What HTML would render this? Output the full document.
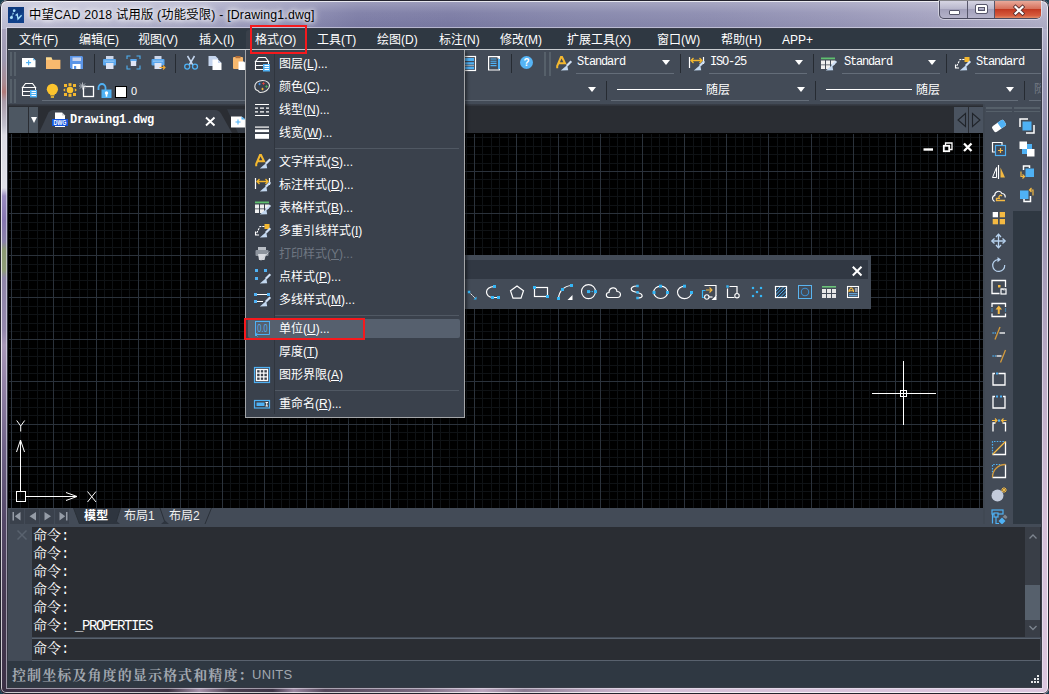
<!DOCTYPE html>
<html lang="zh-CN"><head><meta charset="utf-8"><title>ZWCAD 2018</title>
<style>
html,body{margin:0;padding:0}
body{width:1049px;height:694px;overflow:hidden;position:relative;background:#1b3f4f;font-family:"Liberation Sans","Noto Sans CJK SC",sans-serif;font-size:12px;color:#fff;line-height:1}
#win,#win div,#win svg,.abs{position:absolute}
svg{overflow:visible}
#win{left:0;top:0;width:1049px;height:694px;border-radius:7px 7px 6px 6px;overflow:hidden;
 background:
  linear-gradient(90deg,#c2c2d8 0%,#b9b9d1 10%,#a6a6c4 20%,#8e8eb3 28%,#7d7da6 34%,#7b7ba4 43%,#8586ab 55%,#8c8cb0 68%,#9897b8 80%,#a6a4c1 90%,#b3b1c9 100%);}
#frameL{left:0;top:29px;width:8px;height:658px;background:linear-gradient(180deg,#a9a3bd 0px,#9c98b0 31px,#a88a92 54px,#b07a7a 63px,#a89aa8 72px,#c0bfcc 96px,#dcdce4 106px,#e0e0e8 159px,#9a8cc0 167px,#8676b0 191px,#8a82a8 213px,#8c9a74 221px,#8e9c78 241px,#8f86a8 249px,#9488ac 301px,#a898b8 316px,#9484a8 351px,#6e6286 421px,#544868 491px,#463a52 571px,#3c3046 657px)}
#frameR{left:1041px;top:29px;width:8px;height:658px;background:linear-gradient(180deg,#b2b0c9 0,#9a98b6 8%,#8e8cab 20%,#b9a9c4 50%,#d5bfd8 75%,#dcc6de 100%)}
#frameB{left:0;top:687px;width:1049px;height:7px;background:linear-gradient(90deg,#3a2e42 0,#4a3c52 8%,#3a3040 16%,#a792aa 19%,#4a3e50 22%,#3e3446 26%,#9a86a0 28%,#544659 31%,#7a6a80 40%,#bba6be 46%,#8a7a90 50%,#b9a4bc 56%,#d5bfd6 62%,#dcc6de 100%)}
#edge{left:0;top:0;width:1047px;height:692px;border:1px solid #23232d;border-radius:7px 7px 6px 6px;box-shadow:inset 0 0 0 1px rgba(255,255,255,.75)}
#client{left:8px;top:29px;width:1033px;height:658px;background:#434b57;box-shadow:0 0 0 1px rgba(40,44,54,.9),0 0 0 2px rgba(235,235,245,.55)}
#title{left:29px;top:9px;font-size:12.3px;color:#000;white-space:nowrap;text-shadow:0 0 4px #fff,0 0 7px #fff,0 0 10px rgba(255,255,255,.9);letter-spacing:.2px}
#menubar{left:8px;top:29px;width:1033px;height:20px;background:#2f3842}
#menuline{left:8px;top:49px;width:1033px;height:1px;background:#c9ccd0}
.mi{top:34px;font-size:12px;white-space:nowrap;color:#fff}
#tb{left:8px;top:50px;width:1033px;height:54px;background:#434b57}
.ul{height:1px;background:#646d79}
.vs{width:1px;background:#23272e}
.sim{font-family:"Liberation Mono","Noto Serif CJK SC",monospace;font-size:12px;letter-spacing:-1.2px;white-space:nowrap;color:#fff}
.arrow{width:0;height:0;border-left:4px solid transparent;border-right:4px solid transparent;border-top:5px solid #fff}
#tabbar{left:8px;top:104px;width:1033px;height:29px;background:#2a2d33}
#canvas{left:8px;top:133px;width:975px;height:375px;background:#000}
#laytabs{left:8px;top:508px;width:975px;height:16px;background:#434b57}
#cmd{left:8px;top:524px;width:1033px;height:137px;background:#434b57}
#cmdhist{left:32px;top:527px;width:1009px;height:110px;background:#2a2d33}
#cmdin{left:32px;top:638px;width:1008px;height:21px;background:#2a2d33;border-top:1px solid #59626e;border-bottom:1px solid #59626e}
.ct{left:33px;font-family:"Liberation Mono","Noto Serif CJK SC",monospace;font-size:14px;letter-spacing:-1.4px;white-space:nowrap;color:#fff}
.ct b{font-weight:normal;letter-spacing:0}
#status{left:8px;top:661px;width:1033px;height:26px;background:#2f3842}
#menu{left:245px;top:50px;width:220px;height:368px;background:#3a414c;box-sizing:border-box;border:1px solid #a3a5a8;border-top:none;box-shadow:2px 2px 3px rgba(0,0,0,.45)}
.mt{left:279px;font-size:12px;white-space:nowrap;color:#fff}
.mt u{text-decoration:underline;text-underline-offset:1px}
.msep{left:275px;width:184px;height:1px;background:#505863}
#ftb{left:455px;top:255px;width:416px;height:54px;background:#434b57}
#rtb{left:985px;top:104px;width:28px;height:420px;background:#434b57}
#rtb2{left:1013px;top:104px;width:28px;height:107px;background:#434b57}
#rdark{left:1013px;top:211px;width:28px;height:313px;background:#2f3842}

</style></head>
<body>
<div id="win" class="abs">
 <div id="frameL"></div><div id="frameR"></div><div id="frameB"></div>
 <div id="titleshade" style="left:0;top:0;width:1049px;height:29px;background:linear-gradient(180deg,rgba(255,255,255,.28) 0,rgba(255,255,255,.05) 45%,rgba(40,40,80,.06) 100%)"></div>
 <div id="edge"></div>
 <!-- title icon -->
 <svg style="left:8px;top:7px" width="16" height="16" viewBox="0 0 16 16"><rect width="16" height="16" fill="#10408a"/><path d="M0 0H16V5L0 12Z" fill="#0c3577" opacity=".6"/><path d="M3.6 10.4L6.2 3.6" stroke="#9fdcf7" stroke-width="1.2" stroke-dasharray="2 1" fill="none"/><circle cx="6.2" cy="3.6" r="1.3" fill="#a8e2fa"/><circle cx="3.4" cy="10.6" r="1.5" fill="#a8e2fa"/><path d="M7.6 8.6L9.2 7.2L10 12L13.6 8.2" stroke="#a8e2fa" stroke-width="1.3" fill="none"/></svg>
 <div id="title">中望CAD 2018 试用版 (功能受限) - [Drawing1.dwg]</div>
 <!-- window buttons -->
 <div id="wbtn" style="left:939px;top:1px;width:102px;height:18px;border:1px solid #4a4a5e;border-top:none;border-radius:0 0 5px 5px;box-sizing:border-box;background:linear-gradient(180deg,#d6d5e3 0,#b9b8cd 45%,#a3a1bb 50%,#b4b2c9 100%);box-shadow:0 0 0 1px rgba(255,255,255,.45)">
  <div style="left:55px;top:0;width:46px;height:17px;border-radius:0 0 4px 0;background:linear-gradient(180deg,#e9a99a 0,#d6715c 45%,#c23a22 50%,#d65a3c 85%,#e08a66 100%)"></div>
  <div style="left:27px;top:0;width:1px;height:17px;background:#56566a"></div>
  <div style="left:54px;top:0;width:1px;height:17px;background:#56566a"></div>
  <div style="left:9px;top:9px;width:9px;height:3px;background:#fff;border:1px solid #56566a;border-radius:1px"></div>
  <div style="left:36px;top:4px;width:7px;height:4px;border:2px solid #fff;outline:1px solid #56566a;border-radius:1px;box-shadow:inset 0 0 0 1px #56566a"></div>
  <svg style="left:72px;top:3px" width="14" height="12" viewBox="0 0 14 12" fill="none"><path d="M3.500 3L10.500 9.500M10.500 3L3.500 9.500" stroke="#5a3030" stroke-width="3.800" stroke-linecap="square"/><path d="M3.500 3L10.500 9.500M10.500 3L3.500 9.500" stroke="#fff" stroke-width="2.200" stroke-linecap="square"/></svg>
 </div>
 <div id="client"></div>
 <div id="menubar"></div><div id="menuline"></div>
 <div style="left:246px;top:30px;width:60px;height:19px;background:#39404a;border-radius:3px 3px 0 0"></div>
 <div class="mi" style="left:19px">文件(F)</div>
 <div class="mi" style="left:79px">编辑(E)</div>
 <div class="mi" style="left:138px">视图(V)</div>
 <div class="mi" style="left:199px">插入(I)</div>
 <div class="mi" style="left:255px">格式(O)</div>
 <div class="mi" style="left:317px">工具(T)</div>
 <div class="mi" style="left:377px">绘图(D)</div>
 <div class="mi" style="left:439px">标注(N)</div>
 <div class="mi" style="left:500px">修改(M)</div>
 <div class="mi" style="left:567px">扩展工具(X)</div>
 <div class="mi" style="left:657px">窗口(W)</div>
 <div class="mi" style="left:721px">帮助(H)</div>
 <div class="mi" style="left:782px">APP+</div>
 <div id="tb"></div>
 <div style="left:9.5px;top:52px;width:2px;height:24px;background:#56606a"></div>
<div style="left:9.5px;top:79px;width:2px;height:24px;background:#56606a"></div>
<div style="left:14px;top:52px;width:2px;height:24px;background:#56606a"></div>
<div style="left:14px;top:79px;width:2px;height:24px;background:#56606a"></div>
<div style="left:544px;top:52px;width:2px;height:24px;background:#56606a"></div>
<div style="left:548.5px;top:52px;width:2px;height:24px;background:#56606a"></div>
<div style="left:94px;top:54px;width:1px;height:19px;background:#262b32"></div>
<div style="left:175px;top:54px;width:1px;height:19px;background:#262b32"></div>
<div style="left:511px;top:54px;width:1px;height:19px;background:#262b32"></div>
<div style="left:680px;top:54px;width:1px;height:19px;background:#262b32"></div>
<div style="left:813px;top:54px;width:1px;height:19px;background:#262b32"></div>
<div style="left:946px;top:54px;width:1px;height:19px;background:#262b32"></div>
<svg style="left:21px;top:55px" width="16" height="16" viewBox="0 0 16 16" fill="none"><path d="M1 3H12.200L14.500 5.300V12.300H1Z" fill="#fff"/><path d="M12.200 3L14.500 5.300H12.200Z" fill="#4fb1f4"/><path d="M7.600 5.200V10.200M5.100 7.700H10.100" stroke="#4fb1f4" stroke-width="1.200"/></svg>
<svg style="left:45px;top:55px" width="16" height="16" viewBox="0 0 16 16" fill="none"><path d="M1 2.200H6.500L7.500 5H1Z" fill="#fbd98f"/><rect x="1" y="4.800" width="14.400" height="9.200" fill="#f8b96e"/></svg>
<svg style="left:69px;top:55px" width="16" height="16" viewBox="0 0 16 16" fill="none"><path d="M1 1H13L14 2V14H2.200L1 12.800Z" fill="#5b95e8"/><rect x="3.500" y="2.500" width="8.500" height="3.500" fill="#c8d3ee"/><rect x="3.500" y="9" width="8" height="5" fill="#fff"/><rect x="5" y="11" width="2.200" height="3" fill="#5b95e8"/></svg>
<svg style="left:102px;top:55px" width="16" height="16" viewBox="0 0 16 16" fill="none"><rect x="4" y="1" width="7.500" height="3.500" fill="#ccd6ea"/><rect x="1" y="4" width="13" height="6.500" rx="1" fill="#5ba7ee"/><rect x="2.500" y="5.500" width="10" height="1.300" fill="#8fc6f5"/><rect x="4" y="8" width="7.500" height="6" fill="#dfe5f5"/></svg>
<svg style="left:126px;top:55px" width="16" height="16" viewBox="0 0 16 16" fill="none"><path d="M1 4V1H4.500M10.500 1H14V4M14 10.500V14H10.500M4.500 14H1V10.500" stroke="#4fb1f4" stroke-width="1.100"/><rect x="4.300" y="4" width="6.400" height="2.600" fill="#5ba7ee"/><rect x="4.800" y="6" width="5.400" height="5" fill="#dfe5f5"/></svg>
<svg style="left:150px;top:55px" width="16" height="16" viewBox="0 0 16 16" fill="none"><rect x="4.500" y="1" width="7" height="3.500" fill="#ccd6ea"/><rect x="1.500" y="4" width="13" height="6.500" rx="1" fill="#5ba7ee"/><rect x="3" y="5.500" width="10" height="1.300" fill="#8fc6f5"/><rect x="4.500" y="8" width="7" height="6" fill="#dfe5f5"/><path d="M9.500 12.500H15M13 10.500L15 12.500L13 14.500" stroke="#f4a92f" stroke-width="1.100"/></svg>
<svg style="left:183px;top:55px" width="16" height="16" viewBox="0 0 16 16" fill="none"><path d="M4.500 1L9.800 10M11.500 1L6.200 10" stroke="#c4d6ee" stroke-width="1.500"/><circle cx="4.200" cy="11.600" r="2.500" stroke="#4fb1f4" stroke-width="1.300"/><circle cx="12" cy="11.600" r="2.500" stroke="#4fb1f4" stroke-width="1.300"/></svg>
<svg style="left:207px;top:55px" width="16" height="16" viewBox="0 0 16 16" fill="none"><path d="M1.500 1H8.500L11 3.500V11H1.500Z" fill="#c5d5ee"/><path d="M5.500 4.500H11L14.500 8V15H5.500Z" fill="#fff"/><path d="M11 4.500L14.500 8H11Z" fill="#c5d5ee"/></svg>
<svg style="left:232px;top:55px" width="16" height="16" viewBox="0 0 16 16" fill="none"><rect x="1" y="2" width="10" height="12" rx="1" fill="#f8b96e"/><rect x="3.500" y="1" width="5" height="2.200" fill="#b4703a"/><path d="M6.500 6.500H12L15 9.500V15H6.500Z" fill="#fff"/></svg>
<svg style="left:462px;top:56px" width="16" height="16" viewBox="0 0 16 16" fill="none"><rect x=".500" y=".500" width="13" height="14" stroke="#fff" stroke-width="1.200"/><rect x="2" y="2" width="10" height="3" fill="#4fb1f4"/><rect x="2" y="6.200" width="10" height="2.300" fill="#4fb1f4"/><rect x="2" y="10.600" width="10" height="2.600" fill="#4fb1f4"/><path d="M2.500 9.500H11.500" stroke="#fff" stroke-width="1" stroke-dasharray="1 1"/></svg>
<svg style="left:488px;top:56px" width="16" height="16" viewBox="0 0 16 16" fill="none"><path d="M.600 .600H11.400V14H.600Z" stroke="#fff" stroke-width="1.200"/><path d="M2.500 3H8.500M2.500 5.200H8.500M2.500 7.400H8.500M2.500 9.600H8.500" stroke="#4fb1f4" stroke-width="1.100"/><rect x="10" y="3" width="2" height="10" fill="#4fb1f4"/><rect x="9.500" y="1" width="2.500" height="1.500" fill="#fff"/></svg>
<div style="left:520px;top:56px;width:13px;height:13px;border-radius:50%;background:#56b4f5;color:#fff;font:bold 10px 'Liberation Sans',sans-serif;text-align:center;line-height:13px">?</div>
<svg style="left:555px;top:56px" width="16" height="16" viewBox="0 0 16 16" fill="none"><path d="M2.200 12.300V10L6 1H7L10 7.300H3.600" stroke="#f4b82f" stroke-width="2"/><g transform="translate(0,.6)"><path d="M16.300 4.700L11.800 9.200" stroke="#cfe0f5" stroke-width="2.200"/><path d="M12.200 8.300L13.200 13.600L5.800 14Z" fill="#c3d8f0"/></g></svg>
<svg style="left:688px;top:56px" width="16" height="16" viewBox="0 0 16 16" fill="none"><path d="M1.500 1V12M15.500 1V8" stroke="#fff" stroke-width="1.200"/><path d="M3 4.500H14M5.500 2L3 4.500L5.500 7M11.500 2L14 4.500L11.500 7" stroke="#f4b82f" stroke-width="1.300"/><g transform="translate(0,.6)"><path d="M16.300 4.700L11.800 9.200" stroke="#cfe0f5" stroke-width="2.200"/><path d="M12.200 8.300L13.200 13.600L5.800 14Z" fill="#c3d8f0"/></g></svg>
<svg style="left:820px;top:56px" width="16" height="16" viewBox="0 0 16 16" fill="none"><rect x="1" y="1.500" width="14" height="1.800" fill="#5fc06f"/><path d="M1 4.600h4v3.800h-4zM6 4.600h4v3.800h-4zM11 4.600h4v3.800h-4zM1 9.300h4v3.700h-4zM6 9.300h4v3.700h-4z" fill="#f0f0f0"/><g transform="translate(0,.6)"><path d="M16.300 4.700L11.800 9.200" stroke="#cfe0f5" stroke-width="2.200"/><path d="M12.200 8.300L13.200 13.600L5.800 14Z" fill="#c3d8f0"/></g></svg>
<svg style="left:954px;top:56px" width="16" height="16" viewBox="0 0 16 16" fill="none"><rect x="10.500" y="1" width="5" height="5" fill="#f4b82f"/><path d="M10.500 3.500H6L2 11.500" stroke="#fff" stroke-width="1.100" stroke-dasharray="2.200 1"/><path d="M1.500 8.500V12H5" stroke="#fff" stroke-width="1.100"/><g transform="translate(0,.6)"><path d="M16.300 4.700L11.800 9.200" stroke="#cfe0f5" stroke-width="2.200"/><path d="M12.200 8.300L13.200 13.600L5.800 14Z" fill="#c3d8f0"/></g></svg>
<div class="sim" style="left:577px;top:56px">Standard</div>
<div class="arrow" style="left:662px;top:60px"></div>
<div class="ul" style="left:576px;top:73px;width:98px"></div>
<div class="sim" style="left:710px;top:56px">ISO-25</div>
<div class="arrow" style="left:795px;top:60px"></div>
<div class="ul" style="left:709px;top:73px;width:98px"></div>
<div class="sim" style="left:844px;top:56px">Standard</div>
<div class="arrow" style="left:928px;top:60px"></div>
<div class="ul" style="left:842px;top:73px;width:98px"></div>
<div class="sim" style="left:976px;top:56px">Standard</div>
<div class="ul" style="left:975px;top:73px;width:66px"></div>
<svg style="left:21px;top:82px" width="16" height="16" viewBox="0 0 16 16" fill="none"><path d="M4.500 1.500H11.500L14.500 5.500H1.500ZM1.500 5.500V9.500H14.500V5.500M1.500 9.500V13.500H9" stroke="#fff" stroke-width="1.100"/><rect x="9" y="8" width="7" height="7.500" fill="#4fb1f4"/><path d="M10.500 9.500H15M10.500 11.500H15M10.500 13.500H15" stroke="#fff" stroke-width="1"/></svg>
<svg style="left:45px;top:82px" width="16" height="16" viewBox="0 0 16 16" fill="none"><circle cx="7.400" cy="7.300" r="5.600" fill="#fcc42e"/><rect x="5.200" y="11.500" width="4.400" height="2" fill="#fcc42e"/><rect x="5.800" y="14.200" width="3.200" height="1.600" fill="#fcc42e"/></svg>
<svg style="left:62.5px;top:83px" width="16" height="16" viewBox="0 0 16 16" fill="none"><circle cx="7" cy="7" r="3.300" fill="#fcc42e"/><rect x="1" y="1" width="3" height="3" fill="#f4b82f"/><rect x="5.5" y="0.2" width="3" height="3" fill="#f4b82f"/><rect x="10" y="1" width="3" height="3" fill="#f4b82f"/><rect x="1" y="10" width="3" height="3" fill="#f4b82f"/><rect x="10" y="10" width="3" height="3" fill="#f4b82f"/><rect x="5.5" y="10.8" width="3" height="3" fill="#f4b82f"/><path d="M0 7L2.200 5.200V8.800ZM14 7L11.800 5.200V8.800Z" fill="#f4b82f"/></svg>
<svg style="left:79px;top:82px" width="16" height="16" viewBox="0 0 16 16" fill="none"><rect x="4.500" y="4.500" width="10" height="10" stroke="#fff" stroke-width="1.300"/><path d="M3.500 .500V7.500M0 4H7M1 1.500L6 6.500M6 1.500L1 6.500" stroke="#b9bec5" stroke-width=".900"/></svg>
<svg style="left:97px;top:83px" width="16" height="16" viewBox="0 0 16 16" fill="none"><path d="M1.500 7V4.500A3.500 3.500 0 0 1 8.500 4.500V7" stroke="#4fb1f4" stroke-width="1.800"/><rect x="4.500" y="6.500" width="10" height="8.500" fill="#4fb1f4"/><circle cx="9.500" cy="10" r="1.700" fill="#fff"/><rect x="8.700" y="10.500" width="1.600" height="3.200" fill="#fff"/></svg>
<div style="left:115px;top:86px;width:10px;height:10px;background:#fff;border:1px solid #000"></div>
<div style="left:131px;top:86px;font-size:11px;color:#fff">0</div>
<div class="ul" style="left:42px;top:100px;width:558px"></div>
<div class="arrow" style="left:588px;top:87px"></div>
<div style="left:606px;top:81px;width:1px;height:19px;background:#262b32"></div>
<div style="left:815px;top:81px;width:1px;height:19px;background:#262b32"></div>
<div style="left:1024px;top:81px;width:1px;height:19px;background:#262b32"></div>
<div class="ul" style="left:611px;top:100px;width:198px"></div>
<div style="left:617px;top:89px;width:85px;height:1px;background:#fff"></div>
<div style="left:706px;top:84px;font-size:12px;white-space:nowrap">随层</div>
<div class="arrow" style="left:797px;top:87px"></div>
<div class="ul" style="left:820px;top:100px;width:198px"></div>
<div style="left:826px;top:89px;width:86px;height:1px;background:#fff"></div>
<div style="left:916px;top:84px;font-size:12px;white-space:nowrap">随层</div>
<div class="arrow" style="left:1006px;top:87px"></div>
<div class="ul" style="left:1029px;top:100px;width:12px"></div>
<div style="left:1034px;top:83px;width:7px;overflow:hidden;font-size:12px;white-space:nowrap;color:#717883">随层</div>

 <div id="tabbar"></div>
  <div style="left:8px;top:104px;width:1033px;height:2px;background:linear-gradient(180deg,#3a4049,#2f333a)"></div>
 <div style="left:9px;top:107px;width:19px;height:26px;background:#4d5762"></div>
 <div style="left:29px;top:107px;width:9px;height:26px;background:#4d5762"></div>
 <div class="arrow" style="left:30.500px;top:117px;border-left-width:3px;border-right-width:3px;border-top-width:6px"></div>
 <svg style="left:38px;top:107px" width="212" height="26" viewBox="0 0 212 26"><path d="M189 2.300H207L212 5V26H200Z" fill="#343a44"/><path d="M1 26L10.500 5.500Q12 3 15 3H177Q181 3 183 6.500L194 26Z" fill="#3b414b"/>
  <path d="M168 10.500L176.500 18.500M176.500 10.500L168 18.500" stroke="#fff" stroke-width="1.900" fill="none"/>
  <path d="M193 9.500H203.500L207.500 12.500V20.500H193Z" fill="#fff"/><path d="M203.500 9.500L207.500 12.500H203.500Z" fill="#4fb1f4"/><path d="M200 12.500V17.500M197.500 15H202.500" stroke="#4fb1f4" stroke-width="1.100" fill="none"/>
 </svg>
 <svg style="left:52px;top:112px" width="16" height="16" viewBox="0 0 16 16"><path d="M3 .500H10L13 3.500V15H3Z" fill="#fff"/><path d="M10 .500L13 3.500H10Z" fill="#c9cdd3"/><rect x="0" y="7" width="16" height="7" fill="#1456e0"/><text x="8" y="13" font-family="Liberation Sans,sans-serif" font-size="6.500" font-weight="bold" text-anchor="middle" fill="#fff" textLength="13" lengthAdjust="spacingAndGlyphs">DWG</text></svg>
 <div class="sim" style="left:70px;top:114px;font-weight:bold;letter-spacing:-.2px">Drawing1.dwg</div>
 <div style="left:954px;top:107px;width:14px;height:26px;background:#4a5360"></div>
 <div style="left:969px;top:107px;width:14px;height:26px;background:#4a5360"></div>
 <svg style="left:954px;top:107px" width="29" height="26" viewBox="0 0 29 26" fill="none"><path d="M11.500 6.500V19.500L4 13Z" stroke="#20242a" stroke-width="1.100"/><path d="M18.500 6.500V19.500L26 13Z" stroke="#20242a" stroke-width="1.100"/></svg>

 <div id="canvas"></div>
 <svg class="abs" style="left:8px;top:133px" width="975" height="375" viewBox="0 0 975 375" shape-rendering="crispEdges"><g transform="translate(0.5,0.5)" fill="none"><path stroke="#0f1215" d="M12 0V375M20 0V375M29 0V375M37 0V375M54 0V375M62 0V375M71 0V375M79 0V375M96 0V375M104 0V375M113 0V375M121 0V375M138 0V375M146 0V375M155 0V375M163 0V375M180 0V375M188 0V375M197 0V375M205 0V375M222 0V375M231 0V375M239 0V375M247 0V375M264 0V375M273 0V375M281 0V375M289 0V375M306 0V375M315 0V375M323 0V375M331 0V375M348 0V375M357 0V375M365 0V375M374 0V375M390 0V375M399 0V375M407 0V375M416 0V375M432 0V375M441 0V375M449 0V375M458 0V375M474 0V375M483 0V375M491 0V375M500 0V375M517 0V375M525 0V375M533 0V375M542 0V375M559 0V375M567 0V375M575 0V375M584 0V375M601 0V375M609 0V375M617 0V375M626 0V375M643 0V375M651 0V375M660 0V375M668 0V375M685 0V375M693 0V375M702 0V375M710 0V375M727 0V375M735 0V375M744 0V375M752 0V375M769 0V375M777 0V375M786 0V375M794 0V375M811 0V375M819 0V375M828 0V375M836 0V375M853 0V375M861 0V375M870 0V375M878 0V375M895 0V375M903 0V375M912 0V375M920 0V375M937 0V375M946 0V375M954 0V375M962 0V375M0 4H975M0 13H975M0 21H975M0 30H975M0 46H975M0 55H975M0 63H975M0 72H975M0 89H975M0 97H975M0 105H975M0 114H975M0 131H975M0 139H975M0 147H975M0 156H975M0 173H975M0 181H975M0 190H975M0 198H975M0 215H975M0 223H975M0 232H975M0 240H975M0 257H975M0 265H975M0 274H975M0 282H975M0 299H975M0 307H975M0 316H975M0 324H975M0 341H975M0 350H975M0 358H975M0 366H975"/><path stroke="#2b323b" d="M3 0V375M45 0V375M88 0V375M130 0V375M172 0V375M214 0V375M256 0V375M298 0V375M340 0V375M382 0V375M424 0V375M466 0V375M508 0V375M550 0V375M592 0V375M634 0V375M676 0V375M718 0V375M760 0V375M803 0V375M845 0V375M887 0V375M929 0V375M971 0V375M0 38H975M0 80H975M0 122H975M0 164H975M0 206H975M0 248H975M0 291H975M0 333H975"/></g></svg>
  <svg style="left:8px;top:133px" width="975" height="375" viewBox="8 133 975 375" fill="none" stroke="#fff" stroke-width="1">
  <path d="M20.500 440V492M16.500 452L20.500 440L24.500 452" />
  <rect x="16.500" y="491.500" width="9" height="10"/>
  <path d="M25.500 496.500H77M66 492.500L77 496.500L66 500.500"/>
  <path d="M16.700 420.500L20.700 426L24.700 420.500M20.700 426V431.500"/>
  <path d="M87.500 491.500L96 502M96 491.500L87.500 502"/>
  <path d="M903.500 361V425M872 393.500H936"/><rect x="900.500" y="390.500" width="6" height="6"/>
  <path d="M923.500 149.500H933" stroke-width="2.400"/>
  <path d="M945.500 145.500V143H952V149.500H949.500" stroke-width="1.300"/><rect x="943.800" y="145.800" width="5.400" height="5.400" stroke-width="1.800"/>
  <path d="M964 143.500L971.500 151M971.500 143.500L964 151" stroke-width="2.300"/>
 </svg>

 <div id="laytabs"></div>
  <div style="left:8px;top:524px;width:1033px;height:3px;background:#2f3842"></div>
 <svg style="left:8px;top:508px" width="260" height="16" viewBox="0 0 260 16">
  <rect x="2" y="1" width="14" height="15" fill="#3a414c"/><rect x="17" y="1" width="14" height="15" fill="#3a414c"/><rect x="32" y="1" width="14" height="15" fill="#3a414c"/><rect x="47" y="1" width="14" height="15" fill="#3a414c"/>
  <g fill="#959ca6"><rect x="4.500" y="4" width="1.500" height="8.500"/><path d="M12.500 4V12.500L6.800 8.250Z"/><path d="M28 4V12.500L21.500 8.250Z"/><path d="M36.500 4V12.500L43 8.250Z"/><path d="M51.500 4V12.500L57.200 8.250Z"/><rect x="58" y="4" width="1.500" height="8.500"/></g>
  <path d="M65.500 0H112.500L107.500 16H71.500Z" fill="#2e353f"/>
  <path d="M65.500 0L71.500 16M107.500 16L112.500 0M152 0L157.500 16M197 16L203.500 0" stroke="#2a3038" stroke-width="1" fill="none"/>
  <path d="M104 16L108 12.500L112 16ZM153 16L157 12.500L161 16Z" fill="#2e353f"/>
 </svg>
 <div style="left:84px;top:509px;font:bold 12px/1 'Noto Sans CJK SC','Liberation Sans',sans-serif;letter-spacing:.3px;white-space:nowrap;color:#fff">模型</div>
 <div style="left:124px;top:510px;font-size:12px;white-space:nowrap;color:#f0f0f0">布局1</div>
 <div style="left:169px;top:510px;font-size:12px;white-space:nowrap;color:#f0f0f0">布局2</div>

 <div id="rtb"></div><div id="rtb2"></div><div id="rdark"></div>
 <div style="left:986px;top:107px;width:26px;height:1.500px;background:#56606a"></div>
<div style="left:1014px;top:107px;width:26px;height:1.500px;background:#56606a"></div>
<div style="left:986px;top:110.5px;width:26px;height:1.500px;background:#56606a"></div>
<div style="left:1014px;top:110.5px;width:26px;height:1.500px;background:#56606a"></div>
<div style="left:983px;top:104px;width:2px;height:420px;background:#404853"></div>
<svg style="left:991px;top:118px" width="16" height="16" viewBox="0 0 16 16" fill="none"><g transform="rotate(-35 8 8)"><rect x="1" y="4.500" width="14" height="7" rx="2" fill="#fff"/><path d="M8.500 4.500H13A2 2 0 0 1 15 6.500V9.500A2 2 0 0 1 13 11.500H8.500Z" fill="#4fb1f4"/></g></svg>
<svg style="left:991px;top:141px" width="16" height="16" viewBox="0 0 16 16" fill="none"><path d="M11 4V1.500H1.500V11H4" stroke="#fff" stroke-width="1.200"/><rect x="4.500" y="4.500" width="10" height="10" stroke="#4fb1f4" stroke-width="1.200"/><path d="M9.500 7V12M7 9.500H12" stroke="#f4b942" stroke-width="1.200"/></svg>
<svg style="left:991px;top:164px" width="16" height="16" viewBox="0 0 16 16" fill="none"><path d="M7.500 1V15" stroke="#fff" stroke-width="1.200"/><path d="M5.500 3.500V13.500H1.500Z" stroke="#fff" stroke-width="1"/><path d="M9.500 3.500V13.500H14Z" fill="#f4b942"/></svg>
<svg style="left:991px;top:187px" width="16" height="16" viewBox="0 0 16 16" fill="none"><path d="M3.500 14.500C.500 12.500 1 9 3.800 8.300C3.500 4.500 9 2.500 11 6.500C14 6.500 14.500 9.500 14 10.500" stroke="#fff" stroke-width="1.200"/><path d="M14 13.500H5.500V11.300H8.200C7 9 9.500 7.300 11 9" stroke="#f4b942" stroke-width="1.300"/></svg>
<svg style="left:991px;top:210px" width="16" height="16" viewBox="0 0 16 16" fill="none"><rect x="1.700" y="2" width="5.300" height="5.300" fill="#fff"/><rect x="8.700" y="2" width="5.300" height="5.300" fill="#f4b942"/><rect x="1.700" y="9" width="5.300" height="5.300" fill="#f4b942"/><rect x="8.700" y="9" width="5.300" height="5.300" fill="#f4b942"/></svg>
<svg style="left:991px;top:232.5px" width="16" height="16" viewBox="0 0 16 16" fill="none"><path d="M7.500 1.500V14.500M1 8H14" stroke="#b7d2ee" stroke-width="1.300"/><path d="M5 4L7.500 1.200L10 4M5 12L7.500 14.800L10 12M3.500 5.500L.800 8L3.500 10.500M11.500 5.500L14.200 8L11.500 10.500" stroke="#b7d2ee" stroke-width="1.300"/></svg>
<svg style="left:991px;top:257px" width="16" height="16" viewBox="0 0 16 16" fill="none"><path d="M7 2.500A6 6 0 1 0 13.700 8" stroke="#b7d2ee" stroke-width="1.200"/><path d="M6.500 0L10 2.500L6.500 5.200Z" fill="#b7d2ee"/></svg>
<svg style="left:991px;top:279px" width="16" height="16" viewBox="0 0 16 16" fill="none"><path d="M14.500 8V1.500H1V14.500H8.500" stroke="#fff" stroke-width="1.300"/><rect x="7" y="6" width="2.500" height="2.500" fill="#f4b942"/><rect x="10" y="10" width="5" height="5" stroke="#fff" stroke-width="1.200"/><path d="M11 9.500L13 11.500" stroke="#fff" stroke-width="1"/></svg>
<svg style="left:991px;top:302px" width="16" height="16" viewBox="0 0 16 16" fill="none"><path d="M1 5V1.500H14.500V5M1 11.500V14.500H14.500V11.500" stroke="#fff" stroke-width="1.300"/><path d="M1 6.500V10M14.500 6.500V10" stroke="#4fb1f4" stroke-width="1.200" stroke-dasharray="1 1"/><path d="M7.750 12V5" stroke="#f4b942" stroke-width="2"/><path d="M4.500 7.500L7.750 3.500L11 7.500Z" fill="#f4b942"/></svg>
<svg style="left:991px;top:324.5px" width="16" height="16" viewBox="0 0 16 16" fill="none"><path d="M1.500 8H5" stroke="#4fb1f4" stroke-width="1.300" stroke-dasharray="1.200 1"/><path d="M8.500 8H14" stroke="#fff" stroke-width="1.300"/><path d="M4 14.500L9 2" stroke="#d39a3c" stroke-width="1.300"/></svg>
<svg style="left:991px;top:347.5px" width="16" height="16" viewBox="0 0 16 16" fill="none"><path d="M1.500 8H5" stroke="#4fb1f4" stroke-width="1.300" stroke-dasharray="1.200 1"/><path d="M5.500 8H10.500" stroke="#fff" stroke-width="1.300"/><path d="M9.500 14.500L14.500 2" stroke="#d39a3c" stroke-width="1.300"/></svg>
<svg style="left:991px;top:370.5px" width="16" height="16" viewBox="0 0 16 16" fill="none"><path d="M4 2.500H2V14H14V2.500H7.500" stroke="#fff" stroke-width="1.300"/><rect x="5" y="1.500" width="2" height="2" fill="#4fb1f4"/></svg>
<svg style="left:991px;top:393.5px" width="16" height="16" viewBox="0 0 16 16" fill="none"><path d="M4 2.500H2V14H14V2.500H12" stroke="#fff" stroke-width="1.300"/><rect x="5" y="1.500" width="2" height="2" fill="#4fb1f4"/><rect x="9" y="1.500" width="2" height="2" fill="#4fb1f4"/></svg>
<svg style="left:991px;top:416.5px" width="16" height="16" viewBox="0 0 16 16" fill="none"><path d="M4.500 6H2V14.500M11.500 6H14.500V14.500" stroke="#fff" stroke-width="1.300"/><rect x="7" y="2.500" width="2.200" height="2.200" fill="#4fb1f4"/><path d="M1 3.500H6M4 1.500L6 3.500L4 5.500M15.500 3.500H10.500M12.500 1.500L10.500 3.500L12.500 5.500" stroke="#f4b942" stroke-width="1.100"/></svg>
<svg style="left:991px;top:439.5px" width="16" height="16" viewBox="0 0 16 16" fill="none"><path d="M14.500 1.500V14.500H1.500" stroke="#fff" stroke-width="1.300"/><path d="M1.500 14V1.500H14" stroke="#4fb1f4" stroke-width="1.200" stroke-dasharray="1.500 1.300"/><path d="M1.500 14.500L14.500 1.500" stroke="#f4b942" stroke-width="1.300"/></svg>
<svg style="left:991px;top:462.5px" width="16" height="16" viewBox="0 0 16 16" fill="none"><path d="M14.500 1.500V14.500H1.500" stroke="#fff" stroke-width="1.300"/><path d="M1.500 12V1.500H11" stroke="#4fb1f4" stroke-width="1.200" stroke-dasharray="1.500 1.300"/><path d="M1.500 14.500C1.500 7 7 1.500 14.500 1.500" stroke="#d39a3c" stroke-width="1.300"/></svg>
<svg style="left:991px;top:485.5px" width="16" height="16" viewBox="0 0 16 16" fill="none"><circle cx="6.500" cy="9.500" r="6" fill="#c3cbdb"/><path d="M13 1V7M10 4H16M11 2L15 6M15 2L11 6" stroke="#f4b942" stroke-width="1"/></svg>
<svg style="left:991px;top:508.5px" width="16" height="16" viewBox="0 0 16 16" fill="none"><rect x="1" y="1" width="11" height="4" stroke="#4fb1f4" stroke-width="1.200"/><rect x="3" y="4" width="4" height="4" stroke="#4fb1f4" stroke-width="1.200" fill="#434b57"/><path d="M1.500 5V14.500M5 8V14.500H8" stroke="#4fb1f4" stroke-width="1.200"/><path d="M11 8.500L14.500 12L11 15.500L7.500 12Z" fill="#4fb1f4"/><path d="M11.500 8L14 5.500L16.500 8L15 10Z" fill="#7f8791"/></svg>
<svg style="left:1019px;top:118px" width="16" height="16" viewBox="0 0 16 16" fill="none"><path d="M1 9V1H9M15 7V15H7" stroke="#fff" stroke-width="1.500"/><rect x="3.500" y="3.500" width="9" height="9" fill="#4fb1f4"/></svg>
<svg style="left:1019px;top:141px" width="16" height="16" viewBox="0 0 16 16" fill="none"><rect x="7" y="3" width="6" height="6" fill="#4fb1f4"/><rect x="3" y="7" width="6" height="6" fill="#4fb1f4"/><rect x=".500" y=".500" width="7.500" height="7.500" fill="#fff"/><rect x="8" y="8" width="7.500" height="7.500" fill="#fff"/></svg>
<svg style="left:1019px;top:164px" width="16" height="16" viewBox="0 0 16 16" fill="none"><path d="M4.500 6V2H10.500V4" stroke="#fff" stroke-width="1.500"/><rect x="6.500" y="4.500" width="8.500" height="8.500" fill="#4fb1f4"/><path d="M2 7.500V12.500H5M3.500 10.500L5.500 12.500L3.500 14.500" stroke="#f4b942" stroke-width="1.200"/></svg>
<svg style="left:1019px;top:187px" width="16" height="16" viewBox="0 0 16 16" fill="none"><path d="M5 11.500V14.500H11.500V9" stroke="#fff" stroke-width="1.500"/><rect x="1" y="3.500" width="8.500" height="8.500" fill="#4fb1f4"/><path d="M14 8.500V3H11M12.500 1L10.500 3L12.500 5" stroke="#f4b942" stroke-width="1.200"/></svg>

 <div id="cmd"></div><div id="cmdhist"></div><div id="cmdin"></div>
  <div style="left:16px;top:529px;width:12px;height:12px"><svg style="left:0;top:0" width="12" height="12" viewBox="0 0 12 12"><path d="M1.500 1.500L10.500 10.500M10.500 1.500L1.500 10.500" stroke="#59626e" stroke-width="1.500" fill="none"/></svg></div>
 <div class="ct" style="top:529px"><b>命令</b>:</div>
 <div class="ct" style="top:547px"><b>命令</b>:</div>
 <div class="ct" style="top:565px"><b>命令</b>:</div>
 <div class="ct" style="top:583px"><b>命令</b>:</div>
 <div class="ct" style="top:601px"><b>命令</b>:</div>
 <div class="ct" style="top:619px"><b>命令</b>: _PROPERTIES</div>
 <div class="ct" style="top:642px"><b>命令</b>:</div>
 <div style="left:1025px;top:527px;width:15px;height:110px;background:#393e47"></div>
 <div style="left:1025px;top:585px;width:15px;height:35px;background:#56606c"></div>
 <svg style="left:1025px;top:527px" width="15" height="110" viewBox="0 0 15 110" fill="none" stroke="#7d858f" stroke-width="1.300"><path d="M4.500 11.500L8 8L11.500 11.500M4.500 99L8 102.500L11.500 99"/></svg>

 <div id="status"></div>
  <div style="left:12px;top:667px;font:bold 14px/1 'Noto Serif CJK SC','Liberation Serif',serif;letter-spacing:1.100px;white-space:nowrap;color:#a1a7af">控制坐标及角度的显示格式和精度：</div>
 <div style="left:252px;top:668px;font-size:13px;letter-spacing:.3px;white-space:nowrap;color:#a1a7af">UNITS</div>
 <svg style="left:1030px;top:674px" width="10" height="11" viewBox="0 0 10 11" fill="#e6e8ea"><rect x="7" y="1" width="2" height="2"/><rect x="4" y="4" width="2" height="2"/><rect x="7" y="4" width="2" height="2"/><rect x="1" y="7" width="2" height="2"/><rect x="4" y="7" width="2" height="2"/><rect x="7" y="7" width="2" height="2"/></svg>

 <div id="ftb"></div>
 <div style="left:455px;top:260px;width:413px;height:19px;background:#313843"></div>
<svg style="left:852px;top:266px" width="10" height="10" viewBox="0 0 10 10"><path d="M.800 .800L9.500 9.500M9.500 .800L.800 9.500" stroke="#fff" stroke-width="2" fill="none"/></svg>
<svg style="left:461px;top:284px" width="16" height="16" viewBox="0 0 16 16" fill="none"><path d="M8 8L15 15" stroke="#fff" stroke-width="1" stroke-dasharray="2 1"/><rect x="6.75" y="6.75" width="2.5" height="2.5" fill="#35b6f6"/><path d="M12.500 15.500H15.500V12.500Z" fill="#35b6f6"/></svg>
<svg style="left:485px;top:284px" width="16" height="16" viewBox="0 0 16 16" fill="none"><path d="M9.500 2.500C4 2.500 1.500 5.500 1.500 8C1.500 11 4 13.500 7.500 13.500H14" stroke="#fff" stroke-width="1.200"/><rect x="8" y="1" width="3" height="3" fill="#35b6f6"/><rect x="6" y="12" width="3" height="3" fill="#35b6f6"/><rect x="12" y="12" width="3" height="3" fill="#35b6f6"/></svg>
<svg style="left:509px;top:284px" width="16" height="16" viewBox="0 0 16 16" fill="none"><path d="M8 2L14.500 6.700L12 14.200H4L1.500 6.700Z" stroke="#fff" stroke-width="1.200"/></svg>
<svg style="left:533px;top:284px" width="16" height="16" viewBox="0 0 16 16" fill="none"><rect x="1.500" y="3.500" width="13" height="9" stroke="#fff" stroke-width="1.200"/><rect x="0" y="2" width="3" height="3" fill="#35b6f6"/><rect x="13" y="11" width="3" height="3" fill="#35b6f6"/></svg>
<svg style="left:557px;top:284px" width="16" height="16" viewBox="0 0 16 16" fill="none"><path d="M1.500 14.500C2 7 7 2 14.500 1.500" stroke="#fff" stroke-width="1.200"/><rect x="0" y="13" width="3" height="3" fill="#35b6f6"/><rect x="4" y="4" width="3" height="3" fill="#35b6f6"/><rect x="13" y="0" width="3" height="3" fill="#35b6f6"/><path d="M15.500 11V16H10.500Z" fill="#fff"/></svg>
<svg style="left:581px;top:284px" width="16" height="16" viewBox="0 0 16 16" fill="none"><circle cx="7.500" cy="7.600" r="7" stroke="#fff" stroke-width="1.100"/><path d="M8 7.600H14" stroke="#35b6f6" stroke-width="1" stroke-dasharray="1.500 1"/><rect x="6" y="6.1" width="3" height="3" fill="#35b6f6"/><rect x="13" y="6.1" width="3" height="3" fill="#35b6f6"/></svg>
<svg style="left:605px;top:284px" width="16" height="16" viewBox="0 0 16 16" fill="none"><path d="M4 13.500C.500 13.500 .500 8.500 4 8.500C4 3 11.500 2 12 7.500C16.500 7.500 16.500 13.500 12.500 13.500Z" stroke="#fff" stroke-width="1.200"/></svg>
<svg style="left:629px;top:284px" width="16" height="16" viewBox="0 0 16 16" fill="none"><path d="M8 2C3.500 2 1.500 4 2.500 6C3.500 8 7 8 10 9C13.500 10 14 12.500 12 13.500C11 14 9.500 14 8 14" stroke="#fff" stroke-width="1.200"/><rect x="7.25" y="0.75" width="2.5" height="2.5" fill="#35b6f6"/><rect x="7.25" y="7.05" width="2.5" height="2.5" fill="#35b6f6"/><rect x="7.25" y="12.75" width="2.5" height="2.5" fill="#35b6f6"/></svg>
<svg style="left:653px;top:284px" width="16" height="16" viewBox="0 0 16 16" fill="none"><ellipse cx="7.700" cy="8.300" rx="7" ry="6.200" stroke="#fff" stroke-width="1.100"/><rect x="6" y="0.7" width="3" height="3" fill="#35b6f6"/><rect x="-0.5" y="7" width="3" height="3" fill="#35b6f6"/><rect x="13" y="7" width="3" height="3" fill="#35b6f6"/></svg>
<svg style="left:677px;top:284px" width="16" height="16" viewBox="0 0 16 16" fill="none"><path d="M7.500 2.200A7 6.200 0 1 0 14.500 8.500" stroke="#fff" stroke-width="1.100"/><rect x="6" y="0.7" width="3" height="3" fill="#35b6f6"/><rect x="13" y="7" width="3" height="3" fill="#35b6f6"/></svg>
<svg style="left:701px;top:284px" width="16" height="16" viewBox="0 0 16 16" fill="none"><path d="M3.500 1.500H15V12" stroke="#fff" stroke-width="1.200"/><path d="M4.500 6.500H1.500V13.500H3" stroke="#35b6f6" stroke-width="1.200"/><path d="M5 6H10.500M8.500 3.500L11 6L8.500 8.500" stroke="#f4b942" stroke-width="1.100"/><circle cx="5.800" cy="13" r="2.200" stroke="#fff" stroke-width="1.100"/><path d="M8 13H11.500" stroke="#fff" stroke-width="1.200"/><path d="M15.500 11V16H10.500Z" fill="#fff"/></svg>
<svg style="left:725px;top:284px" width="16" height="16" viewBox="0 0 16 16" fill="none"><path d="M4.500 2.500H12V9M9.500 13.500H2.500V4.500" stroke="#fff" stroke-width="1.200"/><circle cx="12" cy="11.700" r="2.200" stroke="#fff" stroke-width="1.100"/><rect x="1.3" y="1.3" width="2.4" height="2.4" fill="#35b6f6"/></svg>
<svg style="left:749px;top:284px" width="16" height="16" viewBox="0 0 16 16" fill="none"><rect x="2.9" y="2.9" width="2.2" height="2.2" fill="#35b6f6"/><rect x="10.9" y="2.9" width="2.2" height="2.2" fill="#35b6f6"/><rect x="6.9" y="6.9" width="2.2" height="2.2" fill="#35b6f6"/><rect x="2.9" y="10.9" width="2.2" height="2.2" fill="#35b6f6"/><rect x="10.9" y="10.9" width="2.2" height="2.2" fill="#35b6f6"/></svg>
<svg style="left:773px;top:284px" width="16" height="16" viewBox="0 0 16 16" fill="none"><rect x="2.500" y="2.500" width="11" height="11" fill="#2b3b4e"/><path d="M2.500 7.500L7.500 2.500M2.500 11L11 2.500M3.500 13.500L13.500 3.500M7 13.500L13.500 7M10.500 13.500L13.500 10.500" stroke="#4fb1f4" stroke-width=".900"/><rect x="2.500" y="2.500" width="11" height="11" stroke="#fff" stroke-width="1.200"/></svg>
<svg style="left:797px;top:284px" width="16" height="16" viewBox="0 0 16 16" fill="none"><rect x="1.500" y="1.500" width="13" height="13" stroke="#5ab4f0" stroke-width="1"/><circle cx="8" cy="8" r="3.700" stroke="#3d8fd0" stroke-width="1.100"/></svg>
<svg style="left:821px;top:284px" width="16" height="16" viewBox="0 0 16 16" fill="none"><rect x="1" y="2" width="14" height="1.600" fill="#6cc47a"/><g fill="#e6e6e6"><rect x="1" y="5" width="4" height="4"/><rect x="6" y="5" width="4" height="4"/><rect x="11" y="5" width="4" height="4"/><rect x="1" y="10" width="4" height="4"/><rect x="6" y="10" width="4" height="4"/><rect x="11" y="10" width="4" height="4"/></g></svg>
<svg style="left:845px;top:284px" width="16" height="16" viewBox="0 0 16 16" fill="none"><rect x="2.500" y="2.500" width="11" height="11" stroke="#fff" stroke-width="1.100"/><path d="M4 8V6.500L5.800 4H6.700L8.500 6.500V8M4.500 6.800H8" stroke="#f4b942" stroke-width="1.100"/><path d="M10 5H12.500M10 7H12.500" stroke="#fff" stroke-width="1"/><path d="M4 9.700H12.500M4 11.700H12.500" stroke="#6db6ee" stroke-width="1"/></svg>

 <div id="menu"></div>
  <div style="left:274px;top:52px;width:1px;height:362px;background:#2f353e"></div>
 <div style="left:248px;top:319px;width:212px;height:19px;background:#56606e;border-radius:2px"></div>
 <div class="mt" style="top:58px">图层(<u>L</u>)...</div>
 <div class="mt" style="top:81px">颜色(<u>C</u>)...</div>
 <div class="mt" style="top:104px">线型(<u>N</u>)...</div>
 <div class="mt" style="top:127px">线宽(<u>W</u>)...</div>
 <div class="msep" style="top:148px"></div>
 <div class="mt" style="top:156px">文字样式(<u>S</u>)...</div>
 <div class="mt" style="top:179px">标注样式(<u>D</u>)...</div>
 <div class="mt" style="top:202px">表格样式(<u>B</u>)...</div>
 <div class="mt" style="top:225px">多重引线样式(<u>I</u>)</div>
 <div class="mt" style="top:248px;color:#6f7782">打印样式(<u>Y</u>)...</div>
 <div class="mt" style="top:271px">点样式(<u>P</u>)...</div>
 <div class="mt" style="top:294px">多线样式(<u>M</u>)...</div>
 <div class="msep" style="top:315px"></div>
 <div class="mt" style="top:323px">单位(<u>U</u>)...</div>
 <div class="mt" style="top:346px">厚度(<u>T</u>)</div>
 <div class="mt" style="top:369px">图形界限(<u>A</u>)</div>
 <div class="msep" style="top:390px"></div>
 <div class="mt" style="top:398px">重命名(<u>R</u>)...</div>
 <div style="left:244px;top:318px;width:117px;height:18px;border:2px solid #f5191d"></div>

 <svg style="left:254px;top:56px" width="16" height="16" viewBox="0 0 16 16" fill="none"><path d="M4.5 1.5H11.5L14.5 5.5H1.5ZM1.5 5.5V9.5H14.5V5.5M1.5 9.5V13.5H9" stroke="#fff" stroke-width="1.1"/><rect x="9" y="8" width="7" height="7.5" fill="#4fb1f4"/><path d="M10.500 9.500H15M10.500 11.500H15M10.500 13.500H15" stroke="#fff" stroke-width="1"/></svg>
<svg style="left:254px;top:79px" width="16" height="16" viewBox="0 0 16 16" fill="none"><path d="M8.5 1.5C13 1.5 15.5 4 15.5 6.5C15.5 10.5 11 13.5 6.5 13.5C4.5 13.5 4.8 11.8 3.5 11.5C1.5 11 .8 9.5 .8 7.5C.8 4 4 1.5 8.5 1.5Z" stroke="#e8e8e8" stroke-width="1.1"/><path d="M5.500 3.800V6.200M4.300 5H6.700" stroke="#3f8fe8" stroke-width="1"/><path d="M9.500 3.300V5.700M8.300 4.500H10.700" stroke="#e8453c" stroke-width="1"/><path d="M12.500 6.300V8.700M11.300 7.500H13.700" stroke="#43b05c" stroke-width="1"/><path d="M8.500 8.800V11.200M7.300 10H9.700" stroke="#f0b232" stroke-width="1"/></svg>
<svg style="left:254px;top:102px" width="16" height="16" viewBox="0 0 16 16" fill="none"><path d="M1 2.5H15M1 13.500H15" stroke="#fff" stroke-width="1.2"/><path d="M1 6.2H4M6 6.2H10M12 6.2H15M1 9.8H4M6 9.8H10M12 9.8H15" stroke="#fff" stroke-width="1.2"/></svg>
<svg style="left:254px;top:125px" width="16" height="16" viewBox="0 0 16 16" fill="none"><rect x="1" y="1.5" width="14" height="1.2" fill="#fff"/><rect x="1" y="4.5" width="14" height="2.6" fill="#fff"/><rect x="1" y="9" width="14" height="4.8" fill="#fff"/></svg>
<svg style="left:254px;top:154px" width="16" height="16" viewBox="0 0 16 16" fill="none"><path d="M2.200 12.300V10L6 1H7L10 7.300H3.600" stroke="#f4b82f" stroke-width="2"/><g transform="translate(0,.6)"><path d="M16.300 4.700L11.800 9.200" stroke="#cfe0f5" stroke-width="2.200"/><path d="M12.200 8.300L13.200 13.600L5.800 14Z" fill="#c3d8f0"/></g></svg>
<svg style="left:254px;top:177px" width="16" height="16" viewBox="0 0 16 16" fill="none"><path d="M1.500 1V12M15.500 1V8" stroke="#fff" stroke-width="1.2"/><path d="M3 4.500H14M5.500 2L3 4.500L5.500 7M11.500 2L14 4.500L11.500 7" stroke="#f4b82f" stroke-width="1.3"/><g transform="translate(0,.6)"><path d="M16.300 4.700L11.800 9.200" stroke="#cfe0f5" stroke-width="2.200"/><path d="M12.200 8.300L13.200 13.600L5.800 14Z" fill="#c3d8f0"/></g></svg>
<svg style="left:254px;top:200px" width="16" height="16" viewBox="0 0 16 16" fill="none"><rect x="1" y="1.5" width="14" height="1.8" fill="#5fc06f"/><path d="M1 4.600h4v3.800h-4zM6 4.600h4v3.800h-4zM11 4.600h4v3.800h-4zM1 9.300h4v3.700h-4zM6 9.300h4v3.700h-4z" fill="#f0f0f0"/><g transform="translate(0,.6)"><path d="M16.300 4.700L11.800 9.200" stroke="#cfe0f5" stroke-width="2.200"/><path d="M12.200 8.300L13.200 13.600L5.800 14Z" fill="#c3d8f0"/></g></svg>
<svg style="left:254px;top:223px" width="16" height="16" viewBox="0 0 16 16" fill="none"><rect x="10.500" y="1" width="5" height="5" fill="#f4b82f"/><path d="M10.500 3.500H6L2 11.500" stroke="#fff" stroke-width="1.1" stroke-dasharray="2.200 1"/><path d="M1.500 8.500V12H5" stroke="#fff" stroke-width="1.1"/><g transform="translate(0,.6)"><path d="M16.300 4.700L11.800 9.200" stroke="#cfe0f5" stroke-width="2.200"/><path d="M12.200 8.300L13.200 13.600L5.800 14Z" fill="#c3d8f0"/></g></svg>
<svg style="left:254px;top:246px" width="16" height="16" viewBox="0 0 16 16" fill="none"><rect x="4" y="1" width="8" height="4" fill="#b9bec5"/><rect x="1.500" y="4" width="13" height="6" rx="1" fill="#8d949d"/><path d="M4 8H12L10.500 14H5Z" fill="#d8dbe0"/><path d="M7 14.500L15.300 5.500" stroke="#c9cdd3" stroke-width="1"/><path d="M13.500 6L15.500 5L15 7Z" fill="#6c737c"/></svg>
<svg style="left:254px;top:269px" width="16" height="16" viewBox="0 0 16 16" fill="none"><rect x="1" y="0" width="3" height="3" fill="#4fb1f4"/><rect x="10" y="0" width="3" height="3" fill="#4fb1f4"/><rect x="1" y="8" width="3" height="3" fill="#4fb1f4"/><g transform="translate(0,.6)"><path d="M16.300 4.700L11.800 9.200" stroke="#cfe0f5" stroke-width="2.200"/><path d="M12.200 8.300L13.200 13.600L5.800 14Z" fill="#c3d8f0"/></g></svg>
<svg style="left:254px;top:292px" width="16" height="16" viewBox="0 0 16 16" fill="none"><path d="M2 2.500H15M2 9.500H9" stroke="#fff" stroke-width="1.200"/><rect x="0" y="1" width="3" height="3" fill="#4fb1f4"/><rect x="13" y="1" width="3" height="3" fill="#4fb1f4"/><rect x="0" y="8" width="3" height="3" fill="#4fb1f4"/><g transform="translate(0,.6)"><path d="M16.300 4.700L11.800 9.200" stroke="#cfe0f5" stroke-width="2.200"/><path d="M12.200 8.300L13.200 13.600L5.800 14Z" fill="#c3d8f0"/></g></svg>
<svg style="left:254px;top:321px" width="16" height="16" viewBox="0 0 16 16" fill="none"><path d="M1.500 0V15M15.500 0V13.500M1.500 .500H15.500M1.500 13.500H15.500M3.500 12L1.500 13.500L3.500 15.500" stroke="#4fb1f4" stroke-width="1"/><text x="8.500" y="11" font-family="Liberation Sans,sans-serif" font-size="10.500" text-anchor="middle" fill="#4fb1f4" textLength="10.500" lengthAdjust="spacingAndGlyphs">0.0</text></svg>
<svg style="left:254px;top:367px" width="16" height="16" viewBox="0 0 16 16" fill="none"><rect x=".500" y=".500" width="15" height="15" stroke="#4fb1f4" stroke-width="1.200"/><rect x="2.500" y="2.500" width="11" height="11" stroke="#fff" stroke-width="1.300"/><path d="M6.200 2.500V13.500M9.800 2.500V13.500M2.500 6.200H13.500M2.500 9.800H13.500" stroke="#fff" stroke-width="1.200"/></svg>
<svg style="left:254px;top:396px" width="16" height="16" viewBox="0 0 16 16" fill="none"><rect x=".500" y="4.500" width="15" height="7.500" stroke="#4fb1f4" stroke-width="1.200"/><rect x="2.500" y="6.500" width="8" height="3.500" fill="#4fb1f4"/><path d="M11.500 6.500H14M11.500 10H14M12.750 6.500V10" stroke="#fff" stroke-width="1"/></svg>

 <div style="left:250px;top:25px;width:53px;height:24.5px;border:2px solid #f5191d"></div>
</div>

</body></html>
